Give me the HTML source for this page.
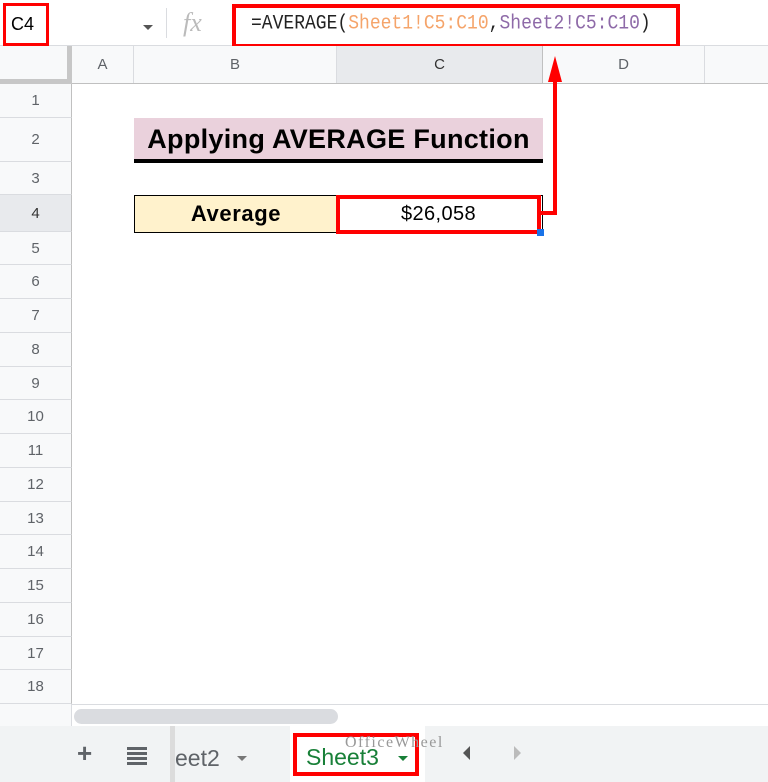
<!DOCTYPE html>
<html><head><style>
body{margin:0;width:768px;height:782px;position:relative;overflow:hidden;background:#fff;font-family:"Liberation Sans",Arial,sans-serif}
.a{position:absolute;box-sizing:border-box}
.hd{background:#f8f9fa;color:#5f6368;font-size:15px;display:flex;align-items:center;justify-content:center}
</style></head><body>
<div class="a" style="left:0;top:0;width:768px;height:46px;background:#fff;border-bottom:1px solid #dadce0"></div>
<div class="a" style="left:3px;top:3px;width:46px;height:43px;border:3px solid #f00"></div>
<div class="a" style="left:11px;top:14px;font-size:18px;color:#000">C4</div>
<div class="a" style="left:143px;top:25px;width:0;height:0;border-left:5px solid transparent;border-right:5px solid transparent;border-top:5px solid #555"></div>
<div class="a" style="left:166px;top:8px;width:1px;height:30px;background:#dadce0"></div>
<div class="a" style="left:183px;top:8px;font-family:'Liberation Serif',serif;font-style:italic;font-size:26px;color:#bbb">fx</div>
<div class="a" style="left:232px;top:4px;width:448px;height:44px;border:4px solid #f00"></div>
<div class="a" style="left:251px;top:14px;font-family:'Liberation Mono',monospace;font-size:18px;color:#222;white-space:nowrap;transform:scaleY(1.15);transform-origin:0 50%">=AVERAGE(<span style="color:#f5a46a">Sheet1!C5:C10</span>,<span style="color:#8e6aa8">Sheet2!C5:C10</span>)</div>
<div class="a" style="left:0;top:46px;width:768px;height:38px;background:#f8f9fa;border-bottom:1px solid #c0c0c0"></div>
<div class="a" style="left:0;top:46px;width:72px;height:38px;border-right:5px solid #c7c7c7;border-bottom:5px solid #c7c7c7;background:#f8f9fa"></div>
<div class="a hd" style="left:72px;top:46px;width:62px;height:37px;border-right:1px solid #dadce0">A</div>
<div class="a hd" style="left:134px;top:46px;width:203px;height:37px;border-right:1px solid #dadce0">B</div>
<div class="a hd" style="left:337px;top:46px;width:206px;height:37px;border-right:1px solid #c0c0c0;background:#e8eaed;color:#333">C</div>
<div class="a hd" style="left:543px;top:46px;width:162px;height:37px;border-right:1px solid #dadce0">D</div>
<div class="a" style="left:0;top:84px;width:72px;height:620px;background:#f8f9fa;border-right:1px solid #c0c0c0"></div>
<div id="rows"></div>
<div class="a" style="left:134px;top:118px;width:409px;height:45px;background:#ead1dc;border-bottom:4px solid #000;font-weight:bold;font-size:27px;display:flex;align-items:center;justify-content:center;padding-top:2px;letter-spacing:0.3px">Applying AVERAGE Function</div>
<div class="a" style="left:134px;top:195px;width:204px;height:38px;background:#fff2cc;border:1px solid #000;font-weight:bold;font-size:22px;letter-spacing:0.6px;display:flex;align-items:center;justify-content:center">Average</div>
<div class="a" style="left:337px;top:195px;width:206px;height:38px;border:1px solid #000"></div>
<div class="a" style="left:336px;top:195px;width:205px;height:39px;border:4px solid #f00;font-size:20px;letter-spacing:0.4px;display:flex;align-items:center;justify-content:center">$26,058</div>
<div class="a" style="left:537px;top:229px;width:7px;height:7px;background:#1a73e8"></div>
<div class="a" style="left:553px;top:78px;width:4px;height:137px;background:#f00"></div>
<div class="a" style="left:539px;top:211px;width:18px;height:4px;background:#f00"></div>
<div class="a" style="left:548px;top:56px;width:0;height:0;border-left:7px solid transparent;border-right:7px solid transparent;border-bottom:26px solid #f00"></div>
<div class="a" style="left:0;top:704px;width:768px;height:22px;background:#fff;border-top:1px solid #dadce0"></div>
<div class="a" style="left:0;top:704px;width:72px;height:22px;background:#f8f9fa;border-right:1px solid #dadce0"></div>
<div class="a" style="left:74px;top:709px;width:264px;height:15px;background:#dadce0;border-radius:8px"></div>
<div class="a" style="left:0;top:726px;width:768px;height:56px;background:#f1f3f4"></div>
<div class="a" style="left:77px;top:738px;font-size:26px;color:#5f6368;font-weight:bold">+</div>
<div class="a" style="left:127px;top:747px;width:20px;height:3px;background:#5f6368;box-shadow:0 5px 0 #5f6368,0 10px 0 #5f6368,0 15px 0 #5f6368"></div>
<div class="a" style="left:170px;top:726px;width:5px;height:56px;background:#dcdcdc"></div>
<div class="a" style="left:175px;top:745px;font-size:23px;color:#5f6368">eet2</div>
<div class="a" style="left:237px;top:756px;border-left:5px solid transparent;border-right:5px solid transparent;border-top:5px solid #777"></div>
<div class="a" style="left:290px;top:726px;width:135px;height:56px;background:#fff"></div>
<div class="a" style="left:293px;top:733px;width:126px;height:43px;border:4px solid #f00"></div>
<div class="a" style="left:306px;top:744px;font-size:23px;color:#188038">Sheet3</div>
<div class="a" style="left:398px;top:756px;border-left:5px solid transparent;border-right:5px solid transparent;border-top:5px solid #188038"></div>
<div class="a" style="left:345px;top:734px;font-family:'Liberation Serif',serif;font-size:16px;color:#999;letter-spacing:1.5px">OfficeWheel</div>
<div class="a" style="left:463px;top:746px;border-top:7px solid transparent;border-bottom:7px solid transparent;border-right:7px solid #555"></div>
<div class="a" style="left:514px;top:746px;border-top:7px solid transparent;border-bottom:7px solid transparent;border-left:7px solid #bbb"></div>
<script>
var t=[84,118,162,195,232,265,299,333,367,400,434,468,502,535,569,603,637,670,704];
var h='';
for(var i=0;i<18;i++){var y=t[i],hh=t[i+1]-y;
h+='<div class="a hd" style="left:0;top:'+y+'px;width:72px;height:'+hh+'px;border-right:1px solid #c0c0c0;border-bottom:1px solid #dadce0;'+(i==3?'background:#e8eaed;color:#333':'')+'">'+(i+1)+'</div>';}
document.getElementById('rows').innerHTML=h;
</script>
</body></html>
